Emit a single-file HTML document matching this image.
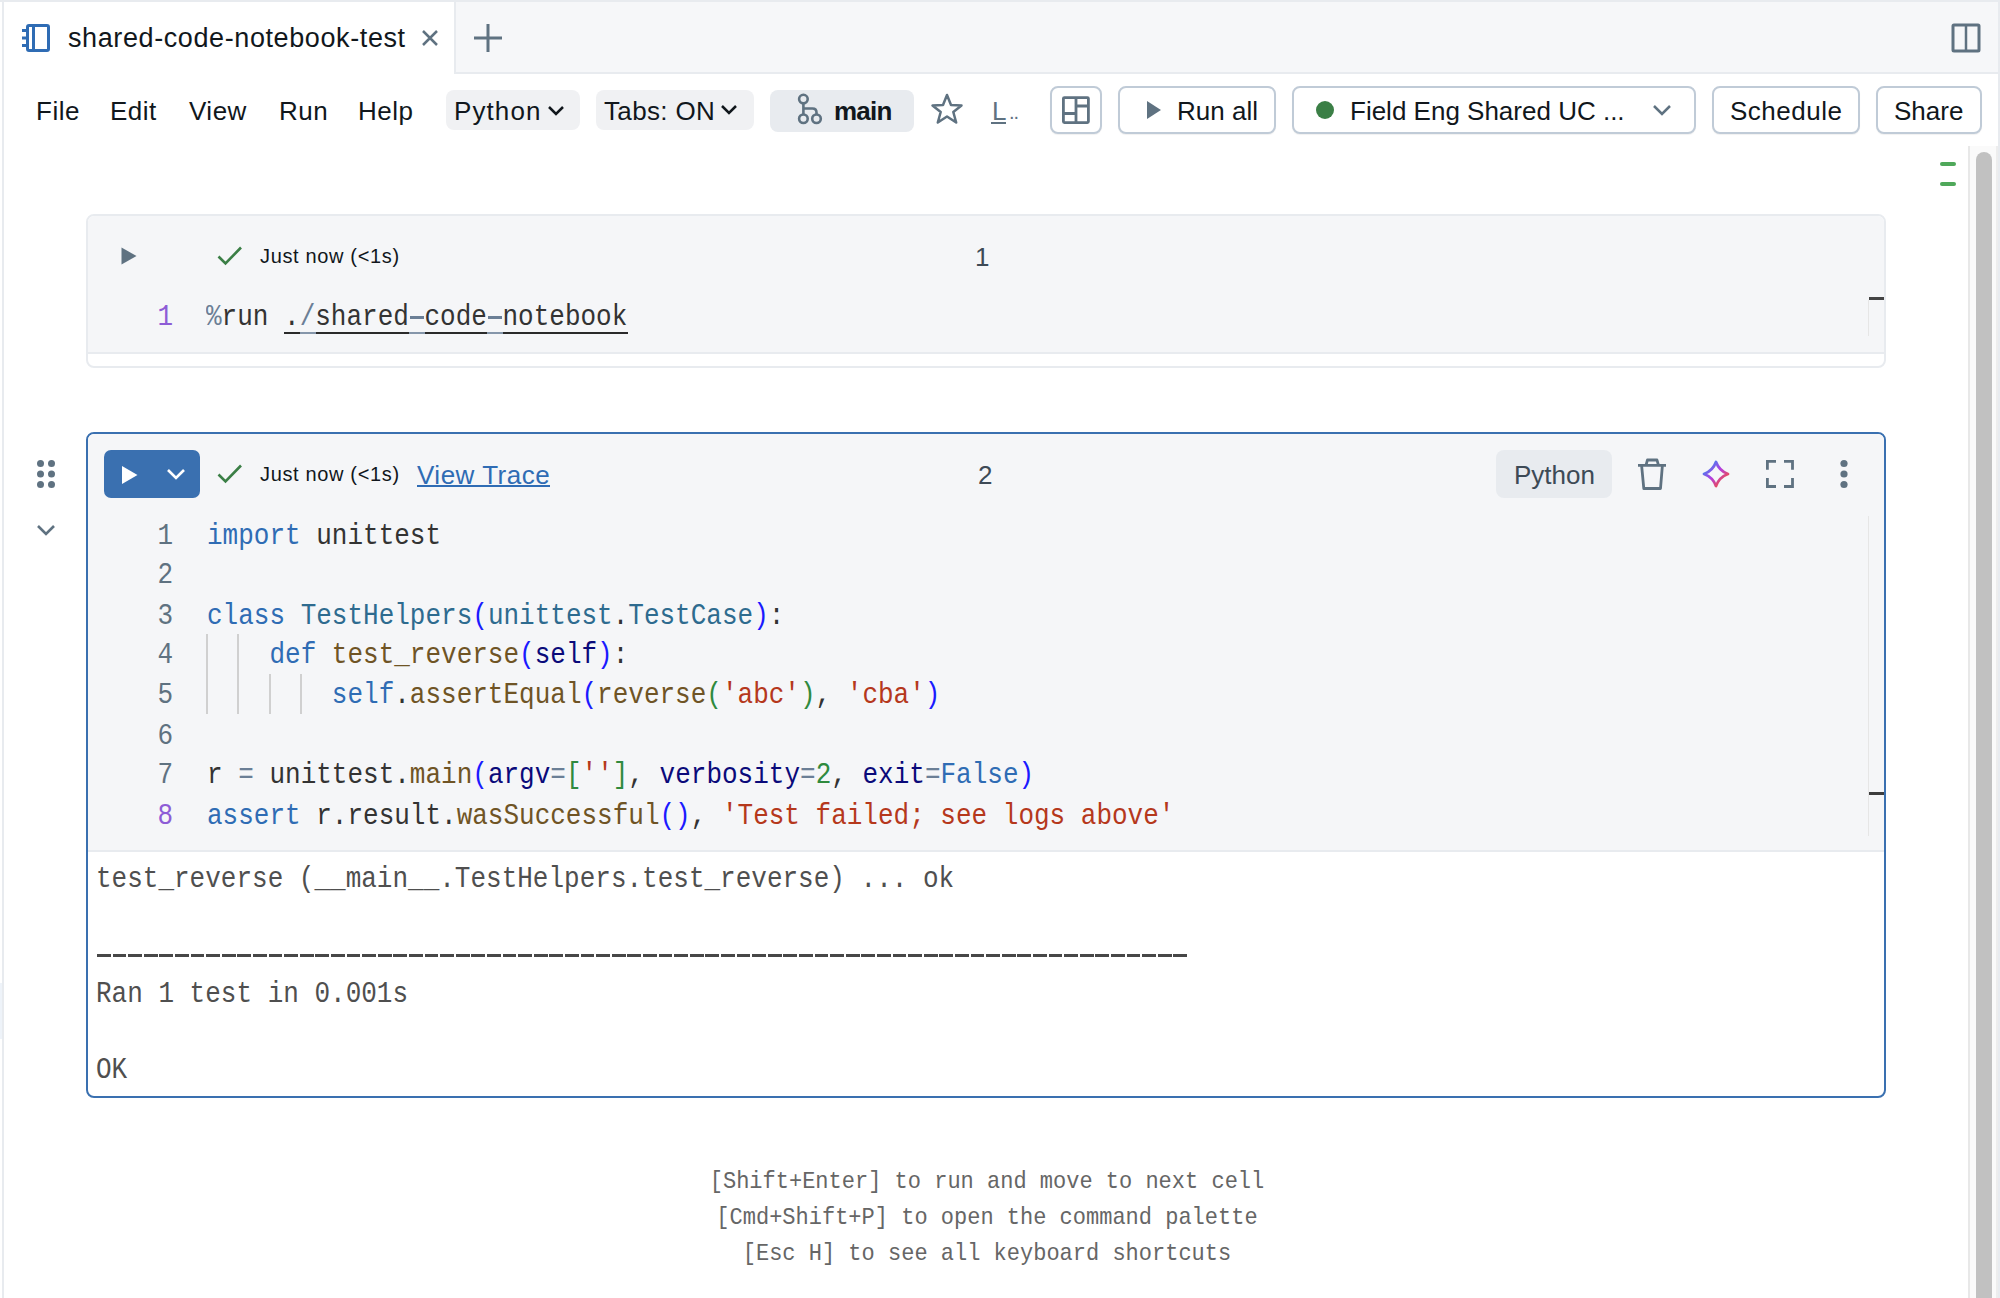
<!DOCTYPE html>
<html><head><meta charset="utf-8">
<style>
*{box-sizing:border-box;margin:0;padding:0}
html,body{width:2000px;height:1298px;overflow:hidden;background:#fff;font-family:"Liberation Sans",sans-serif;color:#11171c}
.a{position:absolute}
.t{position:absolute;white-space:pre;line-height:1}
.mono{font-family:"Liberation Mono",monospace;transform:scaleY(1.1);transform-origin:0 0}
.pill{position:absolute;background:#f0f1f3;border-radius:8px}
.btn{position:absolute;border:2px solid #c0cbd7;border-radius:8px;background:#fff;box-shadow:0 1px 1px rgba(0,0,0,.06)}
svg{position:absolute;overflow:visible}
.kw{color:#2f6cb4}.cl{color:#2e6b8f}.fn{color:#6f5425}.vr{color:#0a0a7a}.st{color:#b5381c}.nm{color:#2f8a3e}.op{color:#6b7f96}.p1{color:#1a1aff}.p2{color:#2f8a3e}
</style></head><body>
<!-- top strip & borders -->
<div class="a" style="left:0;top:0;width:2000px;height:2px;background:#e8ebef"></div>
<div class="a" style="left:2px;top:2px;width:2px;height:1296px;background:#e8ebef"></div>
<div class="a" style="left:1998px;top:0;width:2px;height:1298px;background:#e8ebef"></div>
<div class="a" style="left:0;top:983px;width:2px;height:56px;background:#eef3f9"></div>
<!-- tab bar -->
<div class="a" style="left:454px;top:2px;width:1544px;height:72px;background:#f6f7f9;border-left:2px solid #e8ebef;border-bottom:2px solid #e8ebef"></div>
<svg style="left:0;top:0" width="60" height="60">
  <rect x="27.5" y="25.5" width="21" height="25" rx="1.5" fill="none" stroke="#2f6cb4" stroke-width="3"/>
  <line x1="33.5" y1="26" x2="33.5" y2="50" stroke="#2f6cb4" stroke-width="3"/>
  <line x1="22" y1="30.5" x2="27" y2="30.5" stroke="#2f6cb4" stroke-width="3"/>
  <line x1="22" y1="38" x2="27" y2="38" stroke="#2f6cb4" stroke-width="3"/>
  <line x1="22" y1="45.5" x2="27" y2="45.5" stroke="#2f6cb4" stroke-width="3"/>
</svg>
<div class="t" style="left:68px;top:25px;font-size:27px;letter-spacing:0.6px;color:#11171c">shared-code-notebook-test</div>
<svg style="left:420px;top:28px" width="20" height="20"><path d="M3 3L17 17M17 3L3 17" stroke="#5f7281" stroke-width="2.5"/></svg>
<svg style="left:472px;top:22px" width="32" height="32"><path d="M16 2V30M2 16H30" stroke="#5f7281" stroke-width="3"/></svg>
<svg style="left:1950px;top:22px" width="32" height="32"><rect x="3" y="3" width="26" height="26" rx="1" fill="none" stroke="#5f7281" stroke-width="3"/><line x1="16" y1="3" x2="16" y2="29" stroke="#5f7281" stroke-width="2.5"/></svg>

<!-- toolbar menu -->
<div class="t" style="left:36px;top:98px;font-size:26px;letter-spacing:0.5px">File</div>
<div class="t" style="left:110px;top:98px;font-size:26px;letter-spacing:0.5px">Edit</div>
<div class="t" style="left:189px;top:98px;font-size:26px;letter-spacing:0.5px">View</div>
<div class="t" style="left:279px;top:98px;font-size:26px;letter-spacing:0.5px">Run</div>
<div class="t" style="left:358px;top:98px;font-size:26px;letter-spacing:0.5px">Help</div>

<div class="pill" style="left:446px;top:90px;width:134px;height:40px"></div>
<div class="t" style="left:454px;top:98px;font-size:26px;letter-spacing:1.1px">Python</div>
<svg style="left:547px;top:104px" width="18" height="14"><path d="M2 3L9 10L16 3" fill="none" stroke="#11171c" stroke-width="2.5"/></svg>

<div class="pill" style="left:596px;top:90px;width:158px;height:40px"></div>
<div class="t" style="left:604px;top:98px;font-size:26px;letter-spacing:0.35px">Tabs: ON</div>
<svg style="left:720px;top:103px" width="18" height="14"><path d="M2 3L9 10L16 3" fill="none" stroke="#11171c" stroke-width="2.5"/></svg>

<div class="pill" style="left:770px;top:90px;width:144px;height:42px;background:#e8ebef"></div>
<svg style="left:790px;top:90px" width="34" height="40"><g fill="none" stroke="#5f7281" stroke-width="2.6"><circle cx="13.4" cy="9.1" r="4.3"/><circle cx="13.4" cy="28.75" r="4.3"/><circle cx="26.5" cy="28.75" r="4.3"/><path d="M13.4 13.4V24.45M13.4 18.5H22.5Q26.5 18.5 26.5 22.5V24.45"/></g></svg>
<div class="t" style="left:834px;top:98px;font-size:26px;font-weight:700;letter-spacing:-0.8px">main</div>

<svg style="left:930px;top:92px" width="34" height="34"><path d="M17 3L21 13L31.5 13.5L23.3 20L26.2 30.5L17 24.5L7.8 30.5L10.7 20L2.5 13.5L13 13Z" fill="none" stroke="#5f7281" stroke-width="2.5" stroke-linejoin="round"/></svg>
<div class="t" style="left:992px;top:98px;font-size:26px;color:#5f7281">L</div><div class="t" style="left:1009px;top:98px;font-size:20px;letter-spacing:-1px;color:#5f7281;top:102px">..</div>
<div class="a" style="left:991px;top:122px;width:15px;height:2px;background:#5f7281"></div>

<div class="btn" style="left:1050px;top:86px;width:52px;height:48px"></div>
<svg style="left:1060px;top:94px" width="32" height="32"><rect x="3.4" y="3.6" width="25" height="25" rx="1" fill="none" stroke="#5f7281" stroke-width="2.8"/><path d="M16 3.6V28.6M3.4 19.5H16M16 12H28.4" stroke="#5f7281" stroke-width="2.8" fill="none"/></svg>

<div class="btn" style="left:1118px;top:86px;width:158px;height:48px"></div>
<svg style="left:1144px;top:100px" width="20" height="20"><path d="M3 1L17 10L3 19Z" fill="#5f7281"/></svg>
<div class="t" style="left:1177px;top:98px;font-size:26px">Run all</div>

<div class="btn" style="left:1292px;top:86px;width:404px;height:48px"></div>
<div class="a" style="left:1316px;top:101px;width:18px;height:18px;border-radius:50%;background:#3b7f46"></div>
<div class="t" style="left:1350px;top:98px;font-size:26px">Field Eng Shared UC ...</div>
<svg style="left:1652px;top:103px" width="20" height="14"><path d="M2 3L10 11L18 3" fill="none" stroke="#5f7281" stroke-width="2.5"/></svg>

<div class="btn" style="left:1712px;top:86px;width:148px;height:48px"></div>
<div class="t" style="left:1730px;top:98px;font-size:26px;letter-spacing:0.5px">Schedule</div>
<div class="btn" style="left:1876px;top:86px;width:106px;height:48px"></div>
<div class="t" style="left:1894px;top:98px;font-size:26px">Share</div>

<!-- scrollbar -->
<div class="a" style="left:1968px;top:146px;width:30px;height:1152px;background:#fafafa;border-left:2px solid #e8e8e8;border-right:2px solid #ededed"></div>
<div class="a" style="left:1976px;top:152px;width:16px;height:1160px;border-radius:8px;background:#c1c1c1"></div>
<div class="a" style="left:1940px;top:162px;width:16px;height:4px;border-radius:2px;background:#4fa85a"></div>
<div class="a" style="left:1940px;top:182px;width:16px;height:4px;border-radius:2px;background:#4fa85a"></div>

<!-- CELL 1 -->
<div class="a" style="left:86px;top:214px;width:1800px;height:154px;border:2px solid #e8ebef;border-radius:8px;background:#fff;overflow:hidden">
  <div class="a" style="left:0;top:0;width:1796px;height:138px;background:#f5f6f8;border-bottom:2px solid #e8ebef"></div>
</div>

<!-- CELL 2 -->
<div class="a" style="left:86px;top:432px;width:1800px;height:666px;border:2px solid #3a70b0;border-radius:8px;background:#fff;overflow:hidden">
  <div class="a" style="left:0;top:0;width:1796px;height:418px;background:#f5f6f8;border-bottom:2px solid #e8ebef"></div>
</div>


<!-- cell1 content -->
<svg style="left:119px;top:246px" width="20" height="20"><path d="M2.5 1.5L17.5 10L2.5 18.5Z" fill="#5f7281"/></svg>
<svg style="left:214px;top:242px" width="32" height="28"><path d="M4.5 14.5L11.5 21.5L27 5.5" fill="none" stroke="#3b7f46" stroke-width="2.6"/></svg>
<div class="t" style="left:260px;top:246px;font-size:20px;letter-spacing:0.65px">Just now (&lt;1s)</div>
<div class="t" style="left:975px;top:244px;font-size:26px;color:#3d4a56">1</div>
<div class="t mono" style="left:150px;top:297.4px;font-size:26px;line-height:36.3636px;width:23px;text-align:right;color:#8d5cd6">1</div>
<div class="t mono" style="left:206px;top:297.4px;font-size:26px;line-height:36.3636px;color:#333"><span style="color:#6b7f96">%</span>run .<span style="color:#6b7f96">/</span>shared code notebook</div>
<div class="a" style="left:410px;top:316.4px;width:14px;height:2.2px;background:#6b7f96"></div><div class="a" style="left:488px;top:316.4px;width:14px;height:2.2px;background:#6b7f96"></div>
<div class="a" style="left:284px;top:332px;width:344px;height:2px;background:#2a2a2a"></div><div class="a" style="left:300px;top:332px;width:15.6px;height:2px;background:#8596aa"></div><div class="a" style="left:409px;top:332px;width:15.6px;height:2px;background:#8596aa"></div><div class="a" style="left:487px;top:332px;width:15.6px;height:2px;background:#8596aa"></div>
<div class="a" style="left:1869px;top:296.5px;width:15px;height:3.5px;background:#444"></div>
<div class="a" style="left:1868px;top:300px;width:1px;height:36px;background:#e6e6e6"></div>

<!-- cell2 gutter -->
<svg style="left:30px;top:455px" width="30" height="40"><g fill="#5f7281"><circle cx="10.5" cy="8.5" r="3.5"/><circle cx="21.5" cy="8.5" r="3.5"/><circle cx="10.5" cy="19" r="3.5"/><circle cx="21.5" cy="19" r="3.5"/><circle cx="10.5" cy="29.5" r="3.5"/><circle cx="21.5" cy="29.5" r="3.5"/></g></svg>
<svg style="left:34px;top:520px" width="24" height="20"><path d="M4 6L12 14L20 6" fill="none" stroke="#5f7281" stroke-width="2.6"/></svg>
<!-- cell2 header -->
<div class="a" style="left:104px;top:450px;width:96px;height:48px;border-radius:7px;background:#3a70b0"></div>
<svg style="left:120px;top:464px" width="20" height="22"><path d="M2 2L17.5 11L2 20Z" fill="#fff"/></svg>
<svg style="left:164px;top:466px" width="24" height="18"><path d="M4 4L12 12L20 4" fill="none" stroke="#fff" stroke-width="2.6"/></svg>
<svg style="left:214px;top:460px" width="32" height="28"><path d="M4.5 14.5L11.5 21.5L27 5.5" fill="none" stroke="#3b7f46" stroke-width="2.6"/></svg>
<div class="t" style="left:260px;top:464px;font-size:20px;letter-spacing:0.65px">Just now (&lt;1s)</div>
<div class="t" style="left:417px;top:462px;font-size:26px;letter-spacing:0.5px;color:#2f6cb4">View Trace</div><div class="a" style="left:417px;top:485px;width:133px;height:2px;background:#2f6cb4"></div>
<div class="t" style="left:978px;top:462px;font-size:26px;color:#3d4a56">2</div>
<div class="a" style="left:1496px;top:450px;width:116px;height:48px;border-radius:8px;background:#e8ebef"></div>
<div class="t" style="left:1514px;top:462px;font-size:26px;color:#3d4a56">Python</div>
<svg style="left:1634px;top:456px" width="36" height="36"><path d="M4 9.4H32M12 9.4L13.4 4H23L24.5 9.4M7.6 9.4L9.8 32.5H26.5L28.4 9.4" fill="none" stroke="#5f7281" stroke-width="2.8" stroke-linejoin="round"/></svg>
<svg style="left:1698px;top:456px" width="36" height="36"><defs><linearGradient id="sg" gradientUnits="userSpaceOnUse" x1="10" y1="10" x2="27" y2="27"><stop offset="0" stop-color="#4a7cf0"/><stop offset="0.45" stop-color="#b43ee0"/><stop offset="1" stop-color="#f5503a"/></linearGradient></defs><path d="M18 6C20 11.5 24.5 16 30 18C24.5 20 20 24.5 18 30C16 24.5 11.5 20 6 18C11.5 16 16 11.5 18 6Z" fill="none" stroke="url(#sg)" stroke-width="2.8" stroke-linejoin="round"/></svg>
<svg style="left:1762px;top:456px" width="36" height="36"><path d="M5.4 13.8V5.4H14M22 5.4H30.5V13.8M30.5 22V30.5H22M14 30.5H5.4V22" fill="none" stroke="#5f7281" stroke-width="2.8"/></svg>
<svg style="left:1830px;top:456px" width="28" height="36"><g fill="#5f7281"><circle cx="14" cy="7.5" r="3.6"/><circle cx="14" cy="18" r="3.6"/><circle cx="14" cy="28.5" r="3.6"/></g></svg>
<!-- code -->
<div class="t mono" style="left:142px;top:515.7px;width:31px;font-size:26px;line-height:36.3636px;text-align:right;color:#5f7281">1
2
3
4
5
6
7
<span style="color:#8d5cd6">8</span></div>
<div class="t mono" style="left:207px;top:515.7px;font-size:26px;line-height:36.3636px;color:#333"><span class="kw">import</span> unittest

<span class="kw">class</span> <span class="cl">TestHelpers</span><span class="p1">(</span><span class="cl">unittest</span>.<span class="cl">TestCase</span><span class="p1">)</span>:
    <span class="kw">def</span> <span class="fn">test_reverse</span><span class="p1">(</span><span class="vr">self</span><span class="p1">)</span>:
        <span class="kw">self</span>.<span class="fn">assertEqual</span><span class="p1">(</span><span class="fn">reverse</span><span class="p2">(</span><span class="st">'abc'</span><span class="p2">)</span>, <span class="st">'cba'</span><span class="p1">)</span>

r <span class="op">=</span> unittest.<span class="fn">main</span><span class="p1">(</span><span class="vr">argv</span><span class="op">=</span><span class="p2">[</span><span class="st">''</span><span class="p2">]</span>, <span class="vr">verbosity</span><span class="op">=</span><span class="nm">2</span>, <span class="vr">exit</span><span class="op">=</span><span class="kw">False</span><span class="p1">)</span>
<span class="kw">assert</span> r.result.<span class="fn">wasSuccessful</span><span class="p1">()</span>, <span class="st">'Test failed; see logs above'</span></div>
<!-- indent guides -->
<div class="a" style="left:206px;top:634px;width:2px;height:80px;background:#d0d0d0"></div>
<div class="a" style="left:237px;top:634px;width:2px;height:80px;background:#d0d0d0"></div>
<div class="a" style="left:269px;top:674px;width:2px;height:40px;background:#d0d0d0"></div>
<div class="a" style="left:300px;top:674px;width:2px;height:40px;background:#d0d0d0"></div>
<div class="a" style="left:1869px;top:792px;width:15px;height:3px;background:#3d3d3d"></div>
<div class="a" style="left:1868px;top:516px;width:1px;height:320px;background:#e6e6e6"></div>
<!-- output -->
<div class="t mono" style="left:96px;top:860.5px;font-size:26px;line-height:34.682px;color:#4f4f4f">test_reverse (__main__.TestHelpers.test_reverse) ... ok


Ran 1 test in 0.001s

OK</div>
<div class="a" style="left:97px;top:954.2px;width:1090px;height:2.6px;background:repeating-linear-gradient(90deg,#474747 0 13.8px,transparent 13.8px 15.6px)"></div>
<!-- hints -->
<div class="t mono" style="left:0;top:1164.9px;width:1974px;text-align:center;font-size:22px;line-height:32.727px;color:#666">[Shift+Enter] to run and move to next cell
[Cmd+Shift+P] to open the command palette
[Esc H] to see all keyboard shortcuts</div>
</body></html>
